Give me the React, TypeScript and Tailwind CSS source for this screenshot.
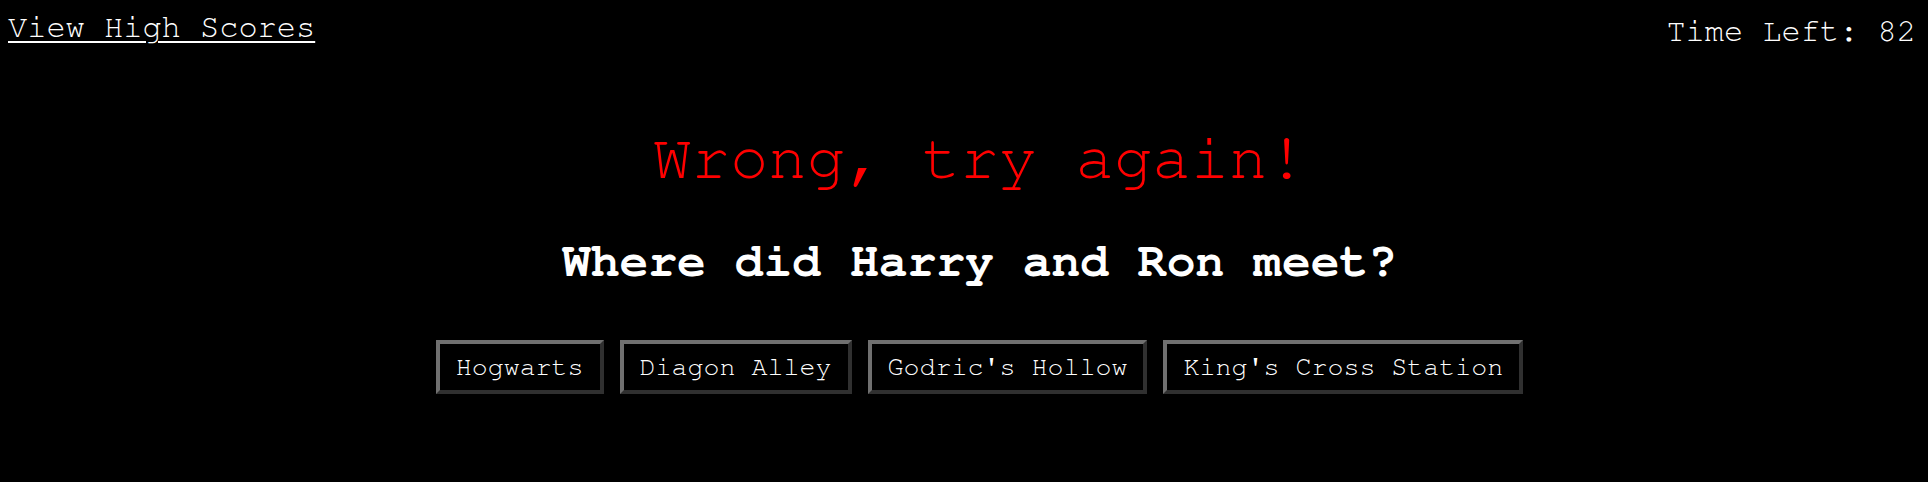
import React from "react";

const answers = ["Hogwarts", "Diagon Alley", "Godric's Hollow", "King's Cross Station"];

export default function App() {
  return (
    <div className="min-h-[482px] w-full bg-black text-white font-['Nimbus_Mono_PS','Nimbus_Mono_L','FreeMono','Courier','Liberation_Mono',monospace]">
      <div className="flex h-[52px] items-start justify-between pl-2 pr-3">
        <a href="#" className="mt-[11px] text-[32px] leading-[normal] text-white underline decoration-2 underline-offset-[4px]">
          View High Scores
        </a>
        <div className="mt-[15px] text-[32px] leading-[normal]">Time Left: 82</div>
      </div>
      <div className="flex flex-col items-center pl-[31px]">
        <div className="mt-[75px] text-[64px] leading-[normal] text-[#ff0000]">Wrong, try again!</div>
        <div className="mt-[47px] text-[48px] font-bold leading-[normal]">Where did Harry and Ron meet?</div>
        <div className="mt-[54px] flex gap-4">
          {answers.map((a) => (
            <button
              key={a}
              className="flex h-[54px] items-center border-4 border-t-[#707070] border-l-[#707070] border-b-[#303030] border-r-[#303030] bg-black px-4 text-[26.67px] leading-[normal] text-white font-['Nimbus_Mono_PS','Nimbus_Mono_L','FreeMono','Courier','Liberation_Mono',monospace]"
            >
              {a}
            </button>
          ))}
        </div>
      </div>
    </div>
  );
}
